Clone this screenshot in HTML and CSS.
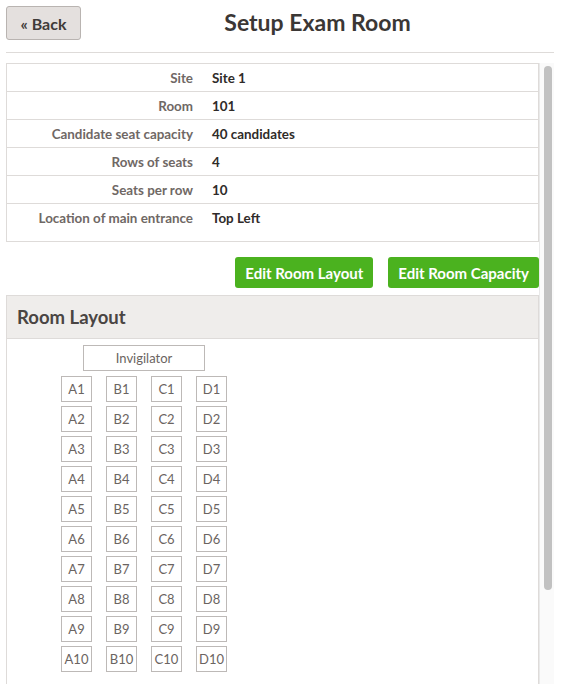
FILE: index.html
```html
<!DOCTYPE html>
<html>
<head>
<meta charset="utf-8">
<link rel="stylesheet" href="styles.css">
</head>
<body>
<div class="page">
  <header class="topbar">
    <button class="back-btn">« Back</button>
    <h1 class="title">Setup Exam Room</h1>
  </header>
  <div class="scroll-area">
    <div class="content">
      <div class="details">
        <div class="row"><div class="label">Site</div><div class="value">Site 1</div></div>
        <div class="row"><div class="label">Room</div><div class="value">101</div></div>
        <div class="row"><div class="label">Candidate seat capacity</div><div class="value">40 candidates</div></div>
        <div class="row"><div class="label">Rows of seats</div><div class="value">4</div></div>
        <div class="row"><div class="label">Seats per row</div><div class="value">10</div></div>
        <div class="row last"><div class="label">Location of main entrance</div><div class="value">Top Left</div></div>
      </div>
      <div class="actions">
        <button class="green-btn">Edit Room Layout</button>
        <button class="green-btn">Edit Room Capacity</button>
      </div>
      <section class="panel">
        <div class="panel-head">Room Layout</div>
        <div class="panel-body">
          <div class="room">
            <div class="invigilator">Invigilator</div>
            <div class="seats" id="seats"></div>
          </div>
        </div>
      </section>
    </div>
    <div class="scrollbar"><div class="thumb"></div></div>
  </div>
</div>
<script src="app.js"></script>
</body>
</html>
```
FILE: app.js
```js
var seats = document.getElementById('seats');
var cols = ['A','B','C','D'];
for (var r = 1; r <= 10; r++) {
  for (var c = 0; c < cols.length; c++) {
    var d = document.createElement('div');
    d.className = 'seat';
    d.textContent = cols[c] + r;
    seats.appendChild(d);
  }
}
```
FILE: styles.css
```css
html, body {
  margin: 0;
  padding: 0;
  height: 684px;
  overflow: hidden;
  background: #fff;
  font-family: Lato, "Open Sans", sans-serif;
}
.page {
  padding: 6px 9px 0 6px;
  display: flex;
  flex-direction: column;
  height: 678px;
}
.topbar {
  display: flex;
  align-items: center;
  border-bottom: 1px solid #dedbd9;
  padding-bottom: 12px;
}
.back-btn {
  width: 75px;
  height: 34px;
  background: #e4e0de;
  border: 1px solid #b9b4b1;
  border-radius: 3px;
  font-family: Lato, sans-serif;
  font-weight: 700;
  font-size: 16px;
  color: #3f3b39;
  padding: 0;
}
.title {
  flex: 1;
  text-align: center;
  margin: -2px 0 0;
  font-size: 23px;
  font-weight: 700;
  color: #3b3735;
}
.scroll-area {
  margin-top: 10px;
  flex: 1;
  min-height: 0;
  display: flex;
}
.content {
  flex: 1;
  min-width: 0;
  overflow: hidden;
}
.scrollbar {
  width: 14px;
  flex: none;
  background: #fafafa;
  border-left: 1px solid #e9e9e9;
  padding: 3px 2px 0 4px;
  box-sizing: border-box;
  width: 15px;
}
.thumb {
  height: 524px;
  background: #c1c1c1;
  border-radius: 5px;
}
.details {
  border: 1px solid #dedbd9;
  padding-bottom: 9px;
}
.row {
  display: grid;
  grid-template-columns: 186px 1fr;
  column-gap: 19px;
  height: 27px;
  align-items: center;
  border-bottom: 1px solid #dedbd9;
  font-size: 13.4px;
  font-weight: 700;
}
.row.last {
  border-bottom: none;
  height: 28px;
}
.label {
  text-align: right;
  color: #6f6865;
}
.value {
  color: #2f2b29;
}
.actions {
  display: flex;
  justify-content: flex-end;
  gap: 15px;
  margin-top: 15px;
  margin-bottom: 7px;
}
.green-btn {
  height: 31px;
  background: #4bb21f;
  border: none;
  border-radius: 3px;
  color: #fff;
  font-family: Lato, sans-serif;
  font-weight: 700;
  font-size: 15px;
  padding: 0 10px;
}
.panel {
  border: 1px solid #dedbd9;
}
.panel-head {
  background: #efedeb;
  height: 42px;
  border-bottom: 1px solid #dedbd9;
  display: flex;
  align-items: center;
  padding-left: 10px;
  font-size: 18.5px;
  font-weight: 700;
  color: #4a4543;
}
.panel-body {
  padding: 6px 0 120px 54px;
}
.room {
  display: inline-flex;
  flex-direction: column;
  align-items: center;
  gap: 5px;
}
.invigilator {
  width: 120px;
  height: 24px;
  border: 1px solid #bdb9b7;
  display: flex;
  align-items: center;
  justify-content: center;
  font-size: 13px;
  color: #6b6461;
}
.seats {
  display: grid;
  grid-template-columns: repeat(4, 31px);
  grid-auto-rows: 26px;
  column-gap: 14px;
  row-gap: 4px;
}
.seat {
  border: 1px solid #bdb9b7;
  display: flex;
  align-items: center;
  justify-content: center;
  font-size: 13px;
  color: #6b6461;
}
```
